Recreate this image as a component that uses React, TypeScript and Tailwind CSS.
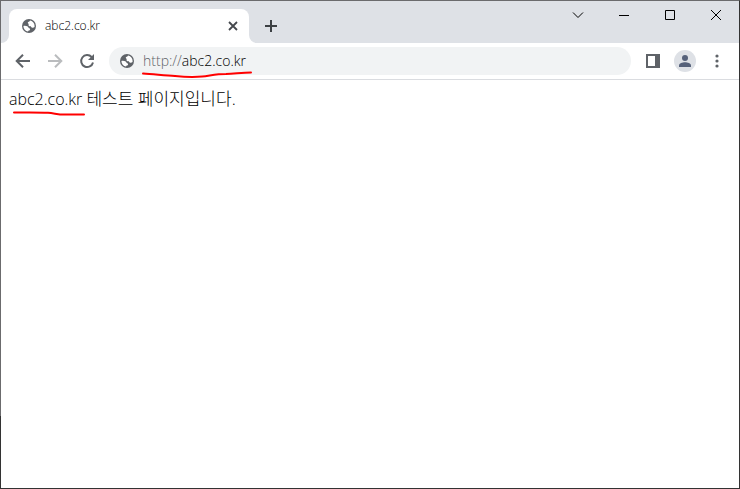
import { useState } from 'react';

const TAB_TITLE = 'abc2.co.kr';

function GlobeIcon() {
  return (
    <svg viewBox="0 0 16 16" className="size-4 shrink-0" aria-hidden="true">
      <circle cx="8" cy="8" r="7" fill="#5f6368" />
      <path
        d="M9.300 2.500c2.500.6 4.300 2.800 4.300 5.500 0 .4 0 .7-.1 1-.6.6-1.300.8-2.100.7-.9-.1-1.400-.6-1.500-1.400-1 .1-1.700-.1-2.100-.6-.5-.6-.4-1.300.1-1.800-.7-.1-1.100-.5-1.100-1.100 0-.8.6-1.100 1.400-1.100.1-.6.500-1 1.100-1.200z"
        fill="#fff"
      />
      <path
        d="M2.400 7.900c1.700-.2 3.300 0 4.300.6.7.4.9 1 .9 1.600 1 .1 1.500.5 1.500 1.200 0 .8-.6 1.200-1.500 1.300-.1.500-.3.800-.6.900C4.400 13.200 2.400 10.900 2.400 7.900z"
        fill="#fff"
      />
    </svg>
  );
}

function WindowControls() {
  return (
    <div className="flex h-7 text-black">
      <button aria-label="Search tabs" className="flex w-[46px] items-center justify-center">
        <svg viewBox="0 0 12 12" className="size-3" fill="none" stroke="currentColor" strokeWidth="1">
          <path d="M1 3.500l5 5 5-5" />
        </svg>
      </button>
      <button aria-label="Minimize" className="flex w-[46px] items-center justify-center">
        <svg viewBox="0 0 10 10" className="size-[10px]" fill="currentColor">
          <path d="M0 5h10v1H0z" />
        </svg>
      </button>
      <button aria-label="Maximize" className="flex w-[46px] items-center justify-center">
        <svg viewBox="0 0 10 10" className="size-[10px]" fill="none" stroke="currentColor">
          <path d="M.5.5h9v9h-9z" />
        </svg>
      </button>
      <button aria-label="Close" className="flex w-[46px] items-center justify-center">
        <svg viewBox="0 0 10 10" className="size-[10px]" fill="none" stroke="currentColor">
          <path d="M0 0l10 10M10 0L0 10" />
        </svg>
      </button>
    </div>
  );
}

function TabStrip() {
  return (
    <div className="flex h-[42px] items-start bg-[#dee1e6]">
      <div className="flex w-2 self-stretch bg-white">
        <div className="flex-1 rounded-br-lg bg-[#dee1e6]" />
      </div>
      <div className="flex h-[34px] w-60 items-center self-end rounded-t-lg bg-white pr-2 pl-3">
        <GlobeIcon />
        <span className="ml-2 flex-1 text-xs font-light text-black">{TAB_TITLE}</span>
        <button aria-label="Close tab" className="flex size-4 items-center justify-center text-[#45484d]">
          <svg viewBox="0 0 10 10" className="size-[10px]" fill="none" stroke="currentColor" strokeWidth="1.8">
            <path d="M1 1l8 8M9 1L1 9" />
          </svg>
        </button>
      </div>
      <div className="flex flex-1 self-stretch bg-white">
        <div className="flex flex-1 items-start rounded-bl-lg bg-[#dee1e6]">
          <button aria-label="New tab" className="mt-[11px] ml-2 flex size-7 items-center justify-center text-[#3c4043]">
            <svg viewBox="0 0 12 12" className="size-3" fill="currentColor">
              <path d="M5 0h2v5h5v2H7v5H5V7H0V5h5z" />
            </svg>
          </button>
          <div className="flex-1" />
          <WindowControls />
        </div>
      </div>
    </div>
  );
}

function Toolbar() {
  const [url, setUrl] = useState(TAB_TITLE);

  return (
    <div className="flex h-[37px] items-center border-b border-[#dadce0] bg-white px-2 text-[#5f6368]">
      <button aria-label="Back" className="flex size-7 items-center justify-center">
        <svg viewBox="0 0 16 16" className="size-4" fill="none" stroke="currentColor" strokeWidth="2">
          <path d="M15 8H2M8 1.700L1.700 8 8 14.300" />
        </svg>
      </button>
      <button aria-label="Forward" disabled className="ml-1 flex size-7 items-center justify-center text-[#babcbe]">
        <svg viewBox="0 0 16 16" className="size-4" fill="none" stroke="currentColor" strokeWidth="2">
          <path d="M1 8h13M8 1.700L14.300 8 8 14.300" />
        </svg>
      </button>
      <button aria-label="Reload" className="ml-1 flex size-7 items-center justify-center">
        <svg viewBox="0 0 16 16" className="size-4" fill="none" stroke="currentColor" strokeWidth="2">
          <path d="M14 9.500A6 6 0 1 1 12.600 4L14 5.600" />
          <path d="M15 1v6H9z" fill="currentColor" stroke="none" />
        </svg>
      </button>
      <div className="relative ml-2 flex h-7 flex-1 items-center rounded-full bg-[#f1f3f4] pr-3 pl-[10px]">
        <GlobeIcon />
        <label htmlFor="address" className="ml-2 text-sm font-light text-[#5f6368]">http://</label>
        <input
          id="address"
          value={url}
          onChange={(e) => setUrl(e.target.value)}
          className="min-w-0 flex-1 bg-transparent text-sm font-light text-black outline-none"
        />
        <svg viewBox="0 0 112 8" className="absolute top-6 left-8 h-2 w-28" fill="none" stroke="#f00" strokeWidth="2" strokeLinecap="round">
          <path d="M2 2.500c11 1 22 1.500 32 2.500 10 1 20 1.200 27 .5 8-.8 14-2.500 24-2.500 10-.5 17-1.500 25-1.500" />
        </svg>
      </div>
      <button aria-label="Side panel" className="ml-2 flex size-7 items-center justify-center">
        <svg viewBox="0 0 14 14" className="size-[14px]" fill="currentColor" fillRule="evenodd">
          <path d="M0 0h14v14H0zM2 2v10h7V2z" />
        </svg>
      </button>
      <button aria-label="Profile" className="ml-1 flex size-7 items-center justify-center">
        <svg viewBox="0 0 22 22" className="size-[22px]">
          <circle cx="11" cy="11" r="11" fill="#dee1e6" />
          <circle cx="11" cy="8" r="3" fill="#56617a" />
          <path d="M5 17v-1.500C5 13.300 8.500 12.300 11 12.300s6 1 6 3.200V17z" fill="#56617a" />
        </svg>
      </button>
      <button aria-label="Menu" className="ml-1 flex size-7 items-center justify-center">
        <svg viewBox="0 0 4 14" className="h-[14px] w-1" fill="currentColor">
          <circle cx="2" cy="2" r="1.600" />
          <circle cx="2" cy="7" r="1.600" />
          <circle cx="2" cy="12" r="1.600" />
        </svg>
      </button>
    </div>
  );
}

export default function App() {
  return (
    <div className="flex min-h-screen bg-white font-['Open_Sans','Noto_Sans_CJK_KR',sans-serif]">
      <div className="flex w-px flex-col">
        <div className="flex-[85] bg-[#6b6b6d]" />
        <div className="flex-[15] bg-[#333]" />
      </div>
      <div className="flex min-w-0 flex-1 flex-col border-t border-r border-b border-t-[#6b6b6d] border-r-[#333] border-b-[#333]">
        <TabStrip />
        <Toolbar />
        <main className="flex-1 p-2">
          <p className="relative text-base leading-[22px] font-light text-black">
            abc2.co.kr <span className="text-[17px]">테스트 페이지입니다.</span>
            <svg viewBox="0 0 76 8" className="absolute top-5 left-0 h-2 w-[76px]" fill="none" stroke="#f00" strokeWidth="2" strokeLinecap="round">
              <path d="M5 4.500c12 0 24-.3 34 .3 6 .4 10 1.700 16 1.700h20" />
            </svg>
          </p>
        </main>
      </div>
    </div>
  );
}
